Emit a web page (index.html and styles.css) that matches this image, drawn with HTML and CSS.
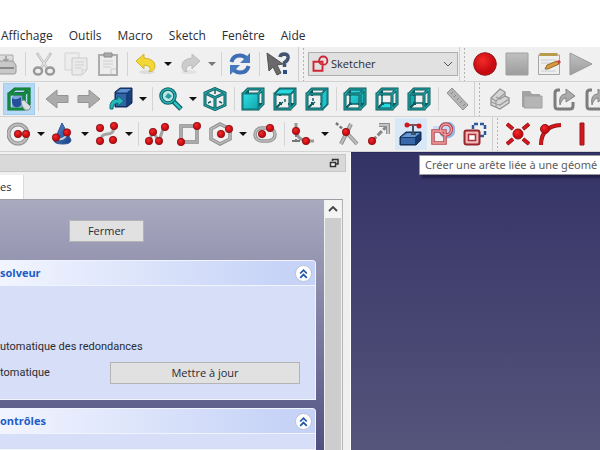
FILE: index.html
```html
<!DOCTYPE html>
<html lang="fr">
<head>
<meta charset="utf-8">
<title>Sketcher</title>
<link rel="stylesheet" href="styles.css">
</head>
<body>
<svg class="defs" aria-hidden="true">
  <defs>
    <linearGradient id="teal" x1="0" y1="0" x2="1" y2="1"><stop offset="0" stop-color="#2fe0e6"/><stop offset="1" stop-color="#12a5ac"/></linearGradient>
    <linearGradient id="blue" x1="0" y1="0" x2="1" y2="1"><stop offset="0" stop-color="#5b8ccb"/><stop offset="1" stop-color="#173f85"/></linearGradient>
    <linearGradient id="grey" x1="0" y1="0" x2="0" y2="1"><stop offset="0" stop-color="#c0c0c0"/><stop offset="1" stop-color="#9c9c9c"/></linearGradient>
    <radialGradient id="red" cx=".4" cy=".35"><stop offset="0" stop-color="#f42a2a"/><stop offset="1" stop-color="#c80a10"/></radialGradient>
    <path id="frame" d="M2 7H17V22H2ZM2 7L7 2H22V17L17 22M17 7L22 2"/>
    <path id="inner" d="M7 2V9M22 17H15M2 22L7 17M7 17H9M7 17V15"/>
    <g id="cube"><use href="#inner" stroke="#0c5a5d" stroke-width="2"/><use href="#frame" stroke="#0c5a5d" stroke-width="3"/><use href="#frame" stroke="#24a5a6" stroke-width="1.2"/></g>
    <circle id="dot" r="3.7" fill="url(#red)" stroke="#7d1216" stroke-width=".8"/>
    <path id="sketch" d="M2 9H14V21H2Z M9.500 7.500a5.500 5.500 0 1 0 11 0a5.500 5.500 0 1 0 -11 0"/>
    <path id="export" d="M8 3H6Q3 3 3 6V19Q3 22 6 22H18Q21 22 21 19V15"/>
  </defs>
</svg>
<div class="app">
  <nav class="menubar">
    <a href="#">Affichage</a><a href="#">Outils</a><a href="#">Macro</a><a href="#">Sketch</a><a href="#">Fenêtre</a><a href="#">Aide</a>
  </nav>

  <div class="toolbar first">
    <button class="tool" aria-label="Imprimer"><svg viewBox="0 0 24 24"><path d="M5 10V3H19V10" fill="#ddd" stroke="#aaa"/><path d="M12 4v5M9.500 7l2.500 2.500L14.500 7" stroke="#999" stroke-width="1.500"/><path d="M2 13L5 9H19L22 13V20Q22 22 20 22H4Q2 22 2 20Z" fill="#c8c8c8" stroke="#999"/><path d="M4 16H20" stroke="#888" stroke-width="2"/></svg></button>
    <span class="sep"></span>
    <button class="tool" aria-label="Couper"><svg viewBox="0 0 24 24"><path d="M5 1L15 16M19 1L9 16" stroke="#bcbcbc" stroke-width="2.500"/><path d="M6 2L15 16M18 2L9 16" stroke="#ececec"/><ellipse cx="6" cy="19" rx="4" ry="3.500" stroke="#999" stroke-width="2.500"/><ellipse cx="18" cy="19" rx="4" ry="3.500" stroke="#999" stroke-width="2.500"/></svg></button>
    <button class="tool" aria-label="Copier"><svg viewBox="0 0 24 24"><path d="M1 1H15V18H1Z" fill="#ededed" stroke="#d3d3d3"/><path d="M8 6H23V18L18 23H8Z" fill="#eaeaea" stroke="#cacaca"/><path d="M11 10H20M11 13H20M11 16H18M18 23V18H23" stroke="#d0d0d0"/></svg></button>
    <button class="tool" aria-label="Coller"><svg viewBox="0 0 24 24"><path d="M3 3H21V23H3Z" fill="#ededed" stroke="#adadad" stroke-width="2"/><path d="M8 1H16V5H8Z" fill="#aaa" stroke="#8d8d8d"/><path d="M7 9H17M7 12H17M7 15H15M15 22V17H20" stroke="#ccc"/></svg></button>
    <span class="sep"></span>
    <button class="tool" aria-label="Annuler"><svg viewBox="0 0 24 24"><ellipse cx="13" cy="20" rx="8" ry="2" fill="#ddd"/><path d="M2 9L10 2V6Q21 7 21 14Q21 19 15 20Q19 14 10 13V17Z" fill="#f2d736" stroke="#d2b42c"/></svg></button>
    <button class="drop" aria-label="Historique"></button>
    <button class="tool" aria-label="Rétablir"><svg viewBox="0 0 24 24"><ellipse cx="11" cy="20" rx="8" ry="2" fill="#e2e2e2"/><path d="M22 9L14 2V6Q4 7 4 14Q4 19 9 20Q6 14 14 13V17Z" fill="#ccc" stroke="#bcbcbc"/></svg></button>
    <button class="drop dim" aria-label="Historique"></button>
    <span class="sep"></span>
    <button class="tool" aria-label="Actualiser"><svg viewBox="0 0 24 24"><path d="M3.500 10Q5 3.500 12 3.500Q16 3.500 18.500 6.500M20.500 14Q19 20.500 12 20.500Q8 20.500 5.500 17.500" stroke="#3e6fb4" stroke-width="4"/><path d="M22 1V11H12ZM2 23V13H12Z" fill="#4678bd"/></svg></button>
    <span class="sep"></span>
    <button class="tool" aria-label="Aide contextuelle"><svg viewBox="0 0 24 24"><path d="M14 5Q14.500 2 18.500 2Q22.500 2.500 22 6Q21.500 9 18.500 10.500V15" stroke="#42546f" stroke-width="3.500"/><path d="M17 18h4v4h-4z" fill="#294e82"/><path d="M1 1L17 12L11 13L15 21L11 23L7 15L3 19Z" fill="#6a696b" stroke="#515154"/></svg></button>
    <span class="handle"></span>
    <div class="combo"><svg viewBox="0 0 24 24"><use href="#sketch" stroke="#cf2633" stroke-width="2.500"/></svg>
      <select aria-label="Atelier"><option>Sketcher</option></select>
      <svg class="chev" viewBox="0 0 10 6"><path d="M1 1L5 5L9 1" stroke="#555"/></svg></div>
    <span class="handle"></span>
    <button class="tool" aria-label="Enregistrer la macro"><svg viewBox="0 0 24 24"><circle cx="12" cy="12" r="11.300" fill="url(#red)" stroke="#8e1c20"/></svg></button>
    <button class="tool" aria-label="Arrêter"><svg viewBox="0 0 24 24"><path d="M1 1H23V23H1Z" fill="url(#grey)" stroke="#a0a0a0"/></svg></button>
    <button class="tool" aria-label="Macros"><svg viewBox="0 0 24 24"><path d="M1.500 3H22.500V22.500H1.500Z" fill="#efefef" stroke="#a5a5a5"/><path d="M2.500 1H20.500V4H2.500Z" fill="#b89b4b"/><path d="M4 8H19M4 11H17M4 19H19" stroke="#ccc"/><path d="M8 17L10 13L20 9L22 12L11 17Z" fill="#d89a38" stroke="#956a34"/><path d="M20 9L22 8L24 10L22 12Z" fill="#d23b3b"/></svg></button>
    <button class="tool" aria-label="Exécuter"><svg viewBox="0 0 24 24"><path d="M1 1V23L23 12Z" fill="url(#grey)" stroke="#989898"/></svg></button>
  </div>

  <div class="toolbar second">
    <button class="tool active" aria-label="Sélection"><svg viewBox="0 0 24 24"><path d="M2 7L8 2H22V17L17 22H2Z" fill="#b5d9f5"/><path d="M5 10L9 6H19V16L15 20H5Z" fill="#7ba5d6"/><path d="M5 11Q9 14 14 10V18Q12 21 8 20Q5 18 5 14Z" fill="#244f9a"/><path d="M8 5H18L16 7H8Z" fill="#34659f"/><path d="M2 7H17V22H2ZM17 7L22 2M17 22L22 17V2H8L2 7" stroke="#0a6b32" stroke-width="3.200"/><path d="M2 7H17V22H2ZM17 7L22 2M17 22L22 17V2H8L2 7" stroke="#16923f" stroke-width="1.500"/><path d="M14 14L17 13L24 20L22 23H18L15 19Z" fill="#d9dfdf" stroke="#7c9397"/></svg></button>
    <span class="sep"></span>
    <button class="tool" aria-label="Précédent"><svg viewBox="0 0 24 24"><path d="M1 12L12 3V8.500H23V15.500H12V21Z" fill="#ababab" stroke="#939393"/></svg></button>
    <button class="tool" aria-label="Suivant"><svg viewBox="0 0 24 24"><path d="M23 12L12 3V8.500H1V15.500H12V21Z" fill="#ababab" stroke="#939393"/></svg></button>
    <button class="tool" aria-label="Aller à l'objet lié"><svg viewBox="0 0 24 24"><path d="M6 5L11 1H23V16L18 20H6Z" fill="#173e78" stroke="#102a54"/><path d="M7 5.500L11.500 2H22L18 5.500Z" fill="#5d8dcc"/><path d="M7 7H17V19H7Z" fill="#3464a8"/><path d="M1 22Q0 12 9 12V9L15 14L9 19V16Q4 16 4 22Z" fill="#25b8bb" stroke="#0b6e72"/></svg></button>
    <button class="drop" aria-label="Liens"></button>
    <span class="sep"></span>
    <button class="tool" aria-label="Ajuster la vue"><svg viewBox="0 0 24 24"><path d="M14 14L22 22" stroke="#0c5a5d" stroke-width="5"/><path d="M14 14L21.500 21.500" stroke="#2cc2c5" stroke-width="2.500"/><circle cx="9" cy="9" r="7" fill="#bfe4e4" stroke="#0c6265" stroke-width="3.500"/><circle cx="9" cy="9" r="7" stroke="#28b3b5" stroke-width="1.500"/><path d="M6 10L9 6L13 9L10 12Z" fill="#249da0"/></svg></button>
    <button class="drop" aria-label="Zoom"></button>
    <button class="tool" aria-label="Isométrique"><svg viewBox="0 0 24 24"><path d="M12 1.500L22 6V18L12 22.500L2 18V6ZM2 6L12 10.500L22 6M12 10.500V22" stroke="#0c5a5d" stroke-width="3"/><path d="M12 1.500L22 6V18L12 22.500L2 18V6ZM2 6L12 10.500L22 6M12 10.500V22" stroke="#24a5a6" stroke-width="1.200"/><path d="M12 3V7M5 16L8 14.500M19 16L16 14.500" stroke="#0c6366" stroke-width="1.500"/></svg></button>
    <span class="sep"></span>
    <button class="tool" aria-label="Avant"><svg viewBox="0 0 24 24"><use href="#cube"/><path d="M2 7H17V22H2Z" fill="url(#teal)" stroke="#0f7377"/></svg></button>
    <button class="tool" aria-label="Dessus"><svg viewBox="0 0 24 24"><use href="#cube"/><path d="M2 7L7 2H22L17 7Z" fill="#25d9df" stroke="#0c6568"/><path d="M5 19l5-4M12 12v3" stroke="#0c6366" stroke-width="1.500"/></svg></button>
    <button class="tool" aria-label="Droite"><svg viewBox="0 0 24 24"><use href="#cube"/><path d="M17 7L22 2V17L17 22Z" fill="#1fc4ca" stroke="#0f7377"/><path d="M5 19l5-4M8 11v3" stroke="#0c6366" stroke-width="1.500"/></svg></button>
    <span class="sep"></span>
    <button class="tool" aria-label="Arrière"><svg viewBox="0 0 24 24"><path d="M7 2H22V17H7Z" fill="url(#teal)"/><path d="M7 2V17H22" stroke="#0c6366" stroke-width="1.500"/><use href="#cube"/></svg></button>
    <button class="tool" aria-label="Dessous"><svg viewBox="0 0 24 24"><path d="M2 22L7 16H22L17 22Z" fill="#25d9df"/><path d="M7 7V16H16" stroke="#0c6366" stroke-width="1.500"/><use href="#cube"/></svg></button>
    <button class="tool" aria-label="Gauche"><svg viewBox="0 0 24 24"><path d="M2 7L8 7V16L2 22Z" fill="#1aa9ae"/><path d="M8 7V16H17" stroke="#0c6366" stroke-width="1.500"/><use href="#cube"/></svg></button>
    <span class="sep"></span>
    <button class="tool" aria-label="Mesurer"><svg viewBox="0 0 24 24"><path d="M2 6L7 1L23 18L18 23Z" fill="#b5b5b5" stroke="#909090"/><path d="M8 5L6 7M11 8L9 10M14 11L12 13M17 14L15 16M20 17L18 19" stroke="#858585"/></svg></button>
    <span class="handle"></span>
    <button class="tool" aria-label="Pièce"><svg viewBox="0 0 24 24"><path d="M3 11L12 2L17 5V9L21 11V16L12 22L3 18Z" fill="#d4d4d4" stroke="#929292" stroke-width="1.300"/><path d="M3 11L8 14L17 6M8 14V20M3 15L12 18L21 12M8 10L12 12L17 9" stroke="#999" stroke-width="1.200"/></svg></button>
    <button class="tool" aria-label="Groupe"><svg viewBox="0 0 24 24"><path d="M2 4H10L12 7H20V20H2Z" fill="#a3a3a3"/><path d="M4 9H22V21H4Z" fill="#b5b5b5" stroke="#a0a0a0"/></svg></button>
    <button class="tool" aria-label="Créer un lien"><svg viewBox="0 0 24 24"><use href="#export" stroke="#7d7d7d" stroke-width="3"/><path d="M8 18Q6 7 14 7V2L23 9L14 15V11Q10 11 8 18Z" fill="#aaa" stroke="#858585"/></svg></button>
    <button class="tool" aria-label="Créer un sous-lien"><svg viewBox="0 0 24 24"><use href="#export" stroke="#7d7d7d" stroke-width="3"/><path d="M8 18Q6 7 14 7V2L23 9L14 15V11Q10 11 8 18Z" fill="#aaa" stroke="#858585"/></svg></button>
  </div>

  <div class="toolbar third">
    <button class="tool" aria-label="Cercle"><svg viewBox="0 0 24 24"><circle cx="11" cy="12" r="9.500" stroke="#929292" stroke-width="4"/><circle cx="11" cy="12" r="9.500" stroke="#bdbdbd" stroke-width="2"/><use href="#dot" x="11" y="12"/><use href="#dot" x="19" y="12"/></svg></button>
    <button class="drop" aria-label="Cercles"></button>
    <button class="tool" aria-label="Coniques"><svg viewBox="0 0 24 24"><path d="M11 1L20 18Q20 22 12 22Q4 22 3 19Z" fill="url(#blue)" stroke="#2c5796"/><path d="M5 16Q13 20 17 10" stroke="#c4cad4" stroke-width="2"/><use href="#dot" x="5" y="15.500"/><use href="#dot" x="16" y="10.500"/></svg></button>
    <button class="drop" aria-label="Coniques"></button>
    <button class="tool" aria-label="B-spline"><svg viewBox="0 0 24 24"><path d="M5 19C6 8 18 16 19 6" stroke="#a4a4a4" stroke-width="3"/><use href="#dot" x="5" y="6"/><use href="#dot" x="19" y="4"/><use href="#dot" x="5" y="19"/><use href="#dot" x="18" y="18"/></svg></button>
    <button class="drop" aria-label="B-splines"></button>
    <span class="sep"></span>
    <button class="tool" aria-label="Polyligne"><svg viewBox="0 0 24 24"><path d="M4 19L8 10L14 19L19 4" stroke="#a0a0a0" stroke-width="3"/><use href="#dot" x="4" y="19"/><use href="#dot" x="8" y="10"/><use href="#dot" x="14" y="19"/><use href="#dot" x="20" y="5"/></svg></button>
    <button class="tool" aria-label="Rectangle"><svg viewBox="0 0 24 24"><path d="M4 4H20V20H4Z" stroke="#888" stroke-width="3.500"/><path d="M4 4H20V20H4Z" stroke="#b6b6b6" stroke-width="1.500"/><use href="#dot" x="20" y="4"/><use href="#dot" x="4" y="20"/></svg></button>
    <button class="tool" aria-label="Polygone"><svg viewBox="0 0 24 24"><path d="M11 2L21 7V17L11 22L2 17V7Z" stroke="#8c8c8c" stroke-width="3.500"/><path d="M11 2L21 7V17L11 22L2 17V7Z" stroke="#bababa" stroke-width="1.500"/><use href="#dot" x="12" y="12"/><use href="#dot" x="20" y="7"/></svg></button>
    <button class="drop" aria-label="Polygones"></button>
    <button class="tool" aria-label="Rainure"><svg viewBox="0 0 24 24"><rect x="2" y="6" width="20" height="13" rx="6.500" stroke="#919191" stroke-width="3.500"/><rect x="2" y="6" width="20" height="13" rx="6.500" stroke="#bdbdbd" stroke-width="1.500"/><use href="#dot" x="9" y="12"/><use href="#dot" x="17" y="6"/></svg></button>
    <span class="sep"></span>
    <button class="tool" aria-label="Congé"><svg viewBox="0 0 24 24"><path d="M5 1V8Q6 18 16 19H23" stroke="#999" stroke-width="3"/><path d="M5 12V22M1 19H12" stroke="#777" stroke-width="2" stroke-dasharray="3 2"/><use href="#dot" x="5" y="9"/><use href="#dot" x="15" y="19"/></svg></button>
    <button class="drop" aria-label="Congés"></button>
    <button class="tool" aria-label="Ajuster"><svg viewBox="0 0 24 24"><path d="M16 2L6 22M12 11L22 22" stroke="#919191" stroke-width="4"/><path d="M16 2L6 22M12 11L22 22" stroke="#bdbdbd" stroke-width="2"/><path d="M1 1L10 9" stroke="#777" stroke-width="2.500" stroke-dasharray="3 2"/><use href="#dot" x="11" y="10"/></svg></button>
    <button class="tool" aria-label="Prolonger"><svg viewBox="0 0 24 24"><path d="M5 19L19 5" stroke="#888" stroke-width="3" stroke-dasharray="6 2"/><path d="M12 3H21V12" stroke="#8f8f8f" stroke-width="4"/><path d="M12 3H21V12" stroke="#c2c2c2" stroke-width="2"/><use href="#dot" x="5" y="19"/></svg></button>
    <button class="tool hover" aria-label="Géométrie externe"><svg viewBox="0 0 24 24"><path d="M1 15L7 10H22V18L17 23H1Z" fill="#17386d" stroke="#142b51"/><path d="M2 15L8 11H21L16 15Z" fill="#6698d0"/><path d="M2 16H16V22H2Z" fill="#3668aa"/><path d="M14 4V12M12 12H17" stroke="#40516b" stroke-width="2"/><path d="M7 3H22" stroke="#8b4f57" stroke-width="2"/><circle cx="8" cy="3" r="2.500" fill="#d3181d"/><circle cx="20" cy="4" r="2.500" fill="#d3181d"/></svg></button>
    <button class="tool" aria-label="Copie carbone"><svg viewBox="0 0 24 24"><circle cx="16" cy="8" r="7.500" fill="#c3dcfa" stroke="#8eb8ea" stroke-width="2"/><path d="M2 4H9V10H2Z" fill="#c7dcf5"/><use href="#sketch" stroke="#b54852" stroke-width="3.500"/><use href="#sketch" stroke="#f3a09f" stroke-width="1.300"/></svg></button>
    <button class="tool" aria-label="Mode construction"><svg viewBox="0 0 24 24"><path d="M10 7V2H22V14H17" stroke="#2d5898" stroke-width="2.500" stroke-dasharray="4 2"/><rect x="1.500" y="8.500" width="15" height="14" rx="2" fill="#f5b7b7" stroke="#96262f" stroke-width="2"/><rect x="5.500" y="12.500" width="7" height="6" fill="#fff" stroke="#a8323a" stroke-width="1.500"/></svg></button>
    <span class="handle"></span>
    <button class="tool" aria-label="Coïncidence"><svg viewBox="0 0 24 24"><path d="M1 2L7 7M23 2L17 7M1 22L7 17M23 22L17 17" stroke="#8c1519" stroke-width="4"/><path d="M1 2L7 7M23 2L17 7M1 22L7 17M23 22L17 17" stroke="#d3171b" stroke-width="2.500"/><circle cx="12" cy="12" r="5" fill="url(#red)" stroke="#8c1519"/></svg></button>
    <button class="tool" aria-label="Point sur objet"><svg viewBox="0 0 24 24"><path d="M3 23Q3 4 23 3" stroke="#8c1519" stroke-width="4"/><path d="M3 23Q3 4 23 3" stroke="#d3171b" stroke-width="2.500"/><circle cx="7" cy="7" r="4.500" fill="url(#red)" stroke="#8c1519"/></svg></button>
    <button class="tool" aria-label="Vertical"><svg viewBox="0 0 24 24"><path d="M10 1H14V23H10Z" fill="#d3171b" stroke="#9c171b"/></svg></button>
  </div>

  <main class="work">
    <section class="dock">
      <header class="dock-title"><button aria-label="Détacher"><svg viewBox="0 0 10 10"><path d="M3.500 3V1.500H9V6H7" stroke="#333" stroke-width="1.500"/><path d="M1.500 4.500H6.500V8.500H1.500Z" fill="#fff" stroke="#333" stroke-width="1.500"/></svg></button></header>
      <div class="tabs"><button class="tab">es</button></div>
      <div class="panel">
        <div class="tasks">
          <div class="close"><button class="btn">Fermer</button></div>
          <section class="task">
            <header><h2>solveur</h2><button class="fold" aria-label="Replier"><svg viewBox="0 0 10 10"><path d="M2 5L5 2L8 5M2 9L5 6L8 9" stroke="#2257ac" stroke-width="1.600"/></svg></button></header>
            <div class="body solver">
              <p>utomatique des redondances</p>
              <div class="update"><span>tomatique</span><button class="btn">Mettre à jour</button></div>
            </div>
          </section>
          <section class="task grow">
            <header><h2>ontrôles</h2><button class="fold" aria-label="Replier"><svg viewBox="0 0 10 10"><path d="M2 5L5 2L8 5M2 9L5 6L8 9" stroke="#2257ac" stroke-width="1.600"/></svg></button></header>
            <div class="body"></div>
          </section>
        </div>
        <div class="scroll"><button aria-label="Défiler vers le haut"><svg viewBox="0 0 10 6"><path d="M1 5L5 1L9 5" stroke="#444" stroke-width="1.800"/></svg></button></div>
      </div>
    </section>
    <section class="view"><div class="tip" role="tooltip">Créer une arête liée à une géomé</div></section>
  </main>
</div>
</body>
</html>
```
FILE: styles.css
```css
* { box-sizing: border-box; }
body {
  margin: 0;
  font-family: "Open Sans", "Noto Sans", sans-serif;
  font-size: 11px;
  line-height: 16px;
  color: #2b2b33;
  background: #fff;
}
button { font: inherit; color: inherit; border: 0; padding: 0; margin: 0; background: none; }
svg { fill: none; display: block; }
.defs { position: absolute; width: 0; height: 0; }
.app { display: flex; flex-direction: column; height: 100vh; overflow: hidden; }

.menubar { display: flex; gap: 16px; height: 47px; padding: 28px 1px 0; flex: none; font-size: 12px; }
.menubar a { color: #2b2b33; text-decoration: none; white-space: nowrap; }

.toolbar {
  display: flex;
  align-items: center;
  flex: none;
  height: 35px;
  background: #f0f0f0;
  border-bottom: 1px solid #d2d2d2;
  overflow: hidden;
}
.first .tool:first-child { margin-left: -10px; }
.second, .third { padding-left: 3px; }
.tool {
  width: 32px;
  height: 32px;
  flex: none;
  display: flex;
  align-items: center;
  justify-content: center;
}
.tool svg { width: 24px; height: 24px; flex: none; }
.active { background: #b5d9f5; border: 1px solid #a0cdf0; }
.hover { background: #d8e8f7; }
.drop { width: 12px; height: 32px; flex: none; display: grid; place-items: center; }
.drop::before { content: ""; border: 4px solid transparent; border-top-color: #111; border-bottom: 0; }
.drop.dim::before { border-top-color: #777; }
.sep { flex: none; width: 6px; height: 24px; background: linear-gradient(#d4d4d4, #d4d4d4) center / 1px 100% no-repeat; }
.handle {
  flex: none;
  width: 10px;
  height: 35px;
  margin-left: 1px;
  border-left: 1px solid #cfcfcf;
  background: radial-gradient(circle, #b2b2b2 1px, transparent 1px) 3px 4px / 3px 4px repeat-y;
}
.first .handle:nth-of-type(5) { margin-left: 4px; }
.combo {
  position: relative;
  flex: none;
  width: 150px;
  height: 24px;
}
.combo svg { position: absolute; left: 4px; top: 3px; width: 18px; height: 18px; pointer-events: none; }
.combo .chev { left: auto; right: 5px; top: 9px; width: 10px; height: 6px; }
.combo select {
  appearance: none;
  width: 100%;
  height: 100%;
  padding: 0 20px 0 22px;
  font: inherit;
  color: #2b2b33;
  background: #e1e1e1;
  border: 1px solid #aeaeae;
  border-radius: 0;
}

.work { display: flex; flex: 1; min-height: 0; }
.dock {
  width: 351px;
  flex: none;
  display: flex;
  flex-direction: column;
  padding: 2px 7px 0 0;
  background: #f0f0f0;
  border-right: 1px solid #fff;
}
.dock-title {
  height: 18px;
  flex: none;
  margin-right: -3px;
  display: flex;
  align-items: center;
  justify-content: flex-end;
  padding-right: 6px;
  background: #d9d9d9;
  border: 1px solid #c6c6c6;
  border-left: 0;
}
.dock-title svg { width: 10px; height: 10px; }
.tabs { height: 27px; flex: none; padding-top: 3px; }
.tab { height: 24px; width: 24px; padding-right: 12px; background: #fff; border-right: 1px solid #d9d9d9; text-align: right; }
.panel { flex: 1; min-height: 0; display: flex; border-top: 1px solid #9d9da5; border-right: 1px solid #b5b5b5; }
.tasks {
  flex: 1;
  display: flex;
  flex-direction: column;
  gap: 8px;
  padding-right: 8px;
  background: linear-gradient(#a9a9c0, #9695b1 25%, #63638f 80%, #504f7e);
}
.close { height: 52px; padding: 20px 0 0 69px; }
.btn { background: #e1e1e1; border: 1px solid #b4b4b4; height: 22px; line-height: 20px; }
.close .btn { width: 75px; }
.task { display: flex; flex-direction: column; border: 1px solid #f0f4ff; border-left: 0; border-radius: 0 4px 0 0; overflow: hidden; background: #d6dff7; }
.grow { flex: 1; }
.task header {
  display: flex;
  align-items: center;
  justify-content: space-between;
  height: 25px;
  flex: none;
  padding-right: 3px;
  background: linear-gradient(90deg, #f2f5ff, #c6d3f7 90%);
  border-bottom: 1px solid #f0f4ff;
}
.task h2 { margin: 0; font-size: 11px; color: #215dc6; }
.fold { width: 17px; height: 17px; border-radius: 50%; background: #fff; border: 1px solid #b9c2da; display: grid; place-items: center; }
.fold svg { width: 11px; height: 11px; }
.solver { height: 113px; padding: 53px 15px 0 0; }
.solver p { margin: 0 0 7px; }
.solver p, .update span { font-family: Roboto, "Open Sans", sans-serif; }
.update { display: flex; align-items: center; justify-content: space-between; }
.update .btn { width: 190px; }
.scroll { width: 18px; flex: none; background: #cdcdcd; border: solid #f0f0f0; border-width: 0 1px; }
.scroll button { width: 100%; height: 18px; background: #f4f4f4; display: grid; place-items: center; }
.scroll svg { width: 10px; height: 6px; }

.view {
  flex: 1;
  min-width: 0;
  position: relative;
  overflow: hidden;
  background: linear-gradient(#333366, #55547b);
  border-top: 1px solid #29295a;
}
.tip {
  position: absolute;
  left: 68px;
  right: -4px;
  top: 2px;
  padding: 1px 0 1px 5px;
  font-family: "Noto Sans", "Open Sans", sans-serif;
  white-space: nowrap;
  color: #5c5c5c;
  background: #fff;
  border: 1px solid #999;
  box-shadow: 3px 3px 2px #1f1f48;
}
```
